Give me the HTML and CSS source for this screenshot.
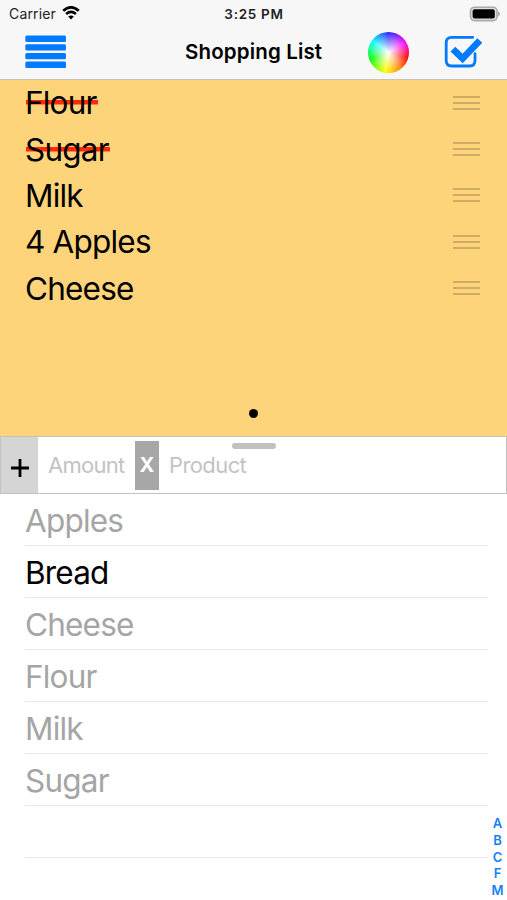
FILE: index.html
```html
<!DOCTYPE html>
<html lang="en">
<head>
<meta charset="utf-8">
<title>Shopping List</title>
<link rel="stylesheet" href="styles.css">
</head>
<body>
<header class="header">
  <div class="status">
    <div class="carrier"><span>Carrier</span>
      <svg class="wifi" viewBox="0 0 18 14" width="18" height="14"><path d="M1.2 4.7Q9 -2 16.8 4.7" fill="none" stroke="#000" stroke-width="2.8"/><path d="M4.1 8Q9 3.8 13.9 8" fill="none" stroke="#000" stroke-width="2.5"/><path d="M9 13.5L6.2 10.5Q9 8.3 11.8 10.5Z"/></svg>
    </div>
    <span class="time">3:25 PM</span>
    <svg class="battery" viewBox="0 0 32 16" width="32" height="16"><rect x="1.5" y="1.2" width="26.5" height="13.4" rx="4" fill="#e0e0e0" stroke="#aaa" stroke-width="1.6"/><rect x="3.6" y="3.2" width="22.2" height="9.4" rx="2"/><path d="M29 5.3Q33 7.9 29 10.6Z" fill="#aaa"/></svg>
  </div>
  <nav class="nav">
    <svg class="menu" viewBox="0 0 42 34" width="42" height="34" fill="#007aff"><rect x=".3" y=".5" width="40.7" height="6.4" rx="1.5"/><rect x=".3" y="9.2" width="40.7" height="6.4" rx="1.5"/><rect x=".3" y="17.9" width="40.7" height="6.4" rx="1.5"/><rect x=".3" y="26.5" width="40.7" height="6.4" rx="1.5"/></svg>
    <h1 class="title">Shopping List</h1>
    <div class="wheel"></div>
    <svg class="check" viewBox="0 0 40 34" width="40" height="34"><path d="M28.7 2.3H7.5Q2.2 2.3 2.2 7.6V25.6Q2.2 31 7.5 31H25.7Q31 31 31 25.6V18.6" fill="none" stroke="#007aff" stroke-width="2.8" stroke-linecap="round"/><path d="M8.9 14.1L18.6 23.5L35.8 5.5" fill="none" stroke="#007aff" stroke-width="6.8" /></svg>
  </nav>
</header>
<main>
  <section class="shopping">
    <ul class="list">
      <li class="item"><span class="done">Flour</span><i class="grip"></i></li>
      <li class="item"><span class="done">Sugar</span><i class="grip"></i></li>
      <li class="item"><span>Milk</span><i class="grip"></i></li>
      <li class="item"><span>4 Apples</span><i class="grip"></i></li>
      <li class="item"><span>Cheese</span><i class="grip"></i></li>
    </ul>
    <div class="dot"></div>
  </section>
  <section class="entry">
    <div class="add"><svg viewBox="0 0 18 18" width="18" height="18"><path d="M9 0V18M0 9H18" stroke="#000" stroke-width="2.8"/></svg></div>
    <span class="amount">Amount</span>
    <b class="times">X</b>
    <span class="product">Product</span>
    <i class="handle"></i>
  </section>
  <section class="catalog">
    <ul class="products">
      <li>Apples</li>
      <li class="available">Bread</li>
      <li>Cheese</li>
      <li>Flour</li>
      <li>Milk</li>
      <li>Sugar</li>
      <li></li>
    </ul>
    <nav class="index"><span>A</span><span>B</span><span>C</span><span>F</span><span>M</span></nav>
  </section>
</main>
</body>
</html>
```
FILE: styles.css
```css
* { box-sizing: border-box; }
body { margin: 0; height: 900px; overflow: hidden; background: #fff; color: #000; font-family: Inter, "Liberation Sans", sans-serif; }
ul { margin: 0; padding: 0; list-style: none; }
svg { display: block; }
.header { height: 80px; background: #f7f7f7; border-bottom: 1px solid #c9c4bb; }
.status { height: 27px; display: grid; grid-template-columns: 1fr auto 1fr; align-items: center; padding: 0 6px 0 9px; font-size: 14px; }
.carrier { display: flex; align-items: center; gap: 6px; color: #222; letter-spacing: .15px; }
.wifi { margin-top: -2px; }
.time { font-size: 13.5px; font-weight: 600; letter-spacing: .7px; color: #222; margin-right: 2px; }
.battery { justify-self: end; }
.nav { height: 50px; display: grid; grid-template-columns: 160px 137px 46px 41px 35px 40px; align-items: center; padding-left: 25px; }
.title { margin: 0; font-size: 20.5px; line-height: 24px; font-weight: 600; letter-spacing: .15px; white-space: nowrap; }
.wheel { grid-column: 4; width: 41px; height: 41px; border-radius: 50%; background: radial-gradient(circle closest-side, #fff, rgba(255,255,255,0)), conic-gradient(#22f, #f0f 60deg, #f00 105deg, #f80 145deg, #ff0 190deg, #0f0 250deg, #0ff 305deg, #22f); }
.check { grid-column: 6; }
.shopping { height: 356px; display: flex; flex-direction: column; align-items: center; justify-content: space-between; background: #fdd47a; padding-bottom: 18px; }
.list { width: 100%; }
.item { height: 46.4px; display: flex; align-items: center; justify-content: space-between; padding: 0 27px 0 25px; font-size: 31.5px; line-height: 46px; letter-spacing: -.8px; }
.done { background: linear-gradient(#ff2a0c, #ff2a0c) 1px 20px / 100% 4.5px no-repeat; padding-right: 1px; }
.grip { width: 27px; height: 15px; background: repeating-linear-gradient(#cfac65 0 2px, transparent 2px 6.2px); }
.dot { width: 9px; height: 9px; border-radius: 50%; background: #000; }
.entry { position: relative; height: 58px; display: flex; align-items: center; border: 1px solid #c2c2c2; font-size: 22px; letter-spacing: -.6px; color: #c3c3c3; }
.add { width: 37px; height: 56px; display: grid; place-items: center; padding-top: 6px; background: #d5d5d5; }
.amount { width: 87px; margin-left: 10px; letter-spacing: -.75px; }
.times { width: 24px; height: 49px; line-height: 49px; text-align: center; background: #a7a7a7; color: #fff; font-size: 20px; letter-spacing: 0; }
.product { margin-left: 10px; }
.handle { position: absolute; left: 231px; top: 6px; width: 44px; height: 6px; border-radius: 3px; background: #c1c1c1; }
.catalog { height: 406px; display: flex; justify-content: space-between; }
.products { width: 463px; margin-left: 25px; }
.products li { height: 52px; border-bottom: 1px solid #e7e7e7; color: #a5a5a5; font-size: 31.5px; line-height: 53px; letter-spacing: -.8px; }
.products .available { color: #000; }
.index { width: 19px; padding-top: 321px; display: flex; flex-direction: column; align-items: center; font-size: 13px; line-height: 16.8px; font-weight: 600; color: #1681f5; }
```
